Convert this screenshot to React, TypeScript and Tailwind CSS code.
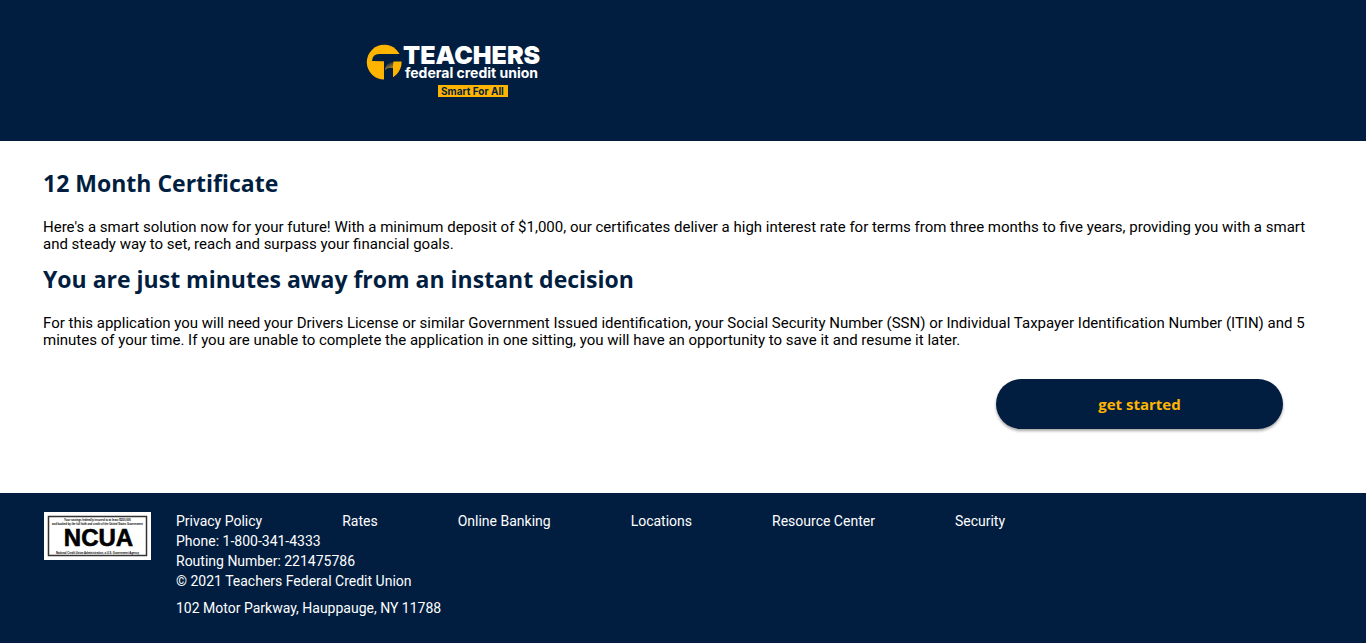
import React from "react";

const links = ["Privacy Policy", "Rates", "Online Banking", "Locations", "Resource Center", "Security"];

function Logo() {
  return (
    <svg className="block h-[56px] w-[180px] overflow-visible" viewBox="0 0 180 56" role="img" aria-label="Teachers Federal Credit Union, Smart For All">
      <defs>
        <linearGradient id="stem" x1="0.8" y1="1" x2="0.4" y2="0">
          <stop offset="0" stopColor="#d9a032" />
          <stop offset="1" stopColor="#011e41" />
        </linearGradient>
      </defs>
      <circle cx="19.200" cy="19.200" r="17.400" fill="#ffb500" />
      <path d="M7 18 Q7.500 11.200 14 11 H36 L38 18.500 H24 Q20 18 7 18 Z" fill="#011e41" />
      <path d="M19 38 V17 H29 Q28 19 28 22 V36 Z" fill="#011e41" />
      <path d="M20 26 Q21 20 28 19 V25 Q23 24 20 27Z" fill="url(#stem)" />
      <g fill="#fff" fontFamily="Inter, sans-serif">
        <text x="38" y="21" fontSize="25" fontWeight="900">TEACHERS</text>
        <text x="40" y="35" fontSize="14" fontWeight="700">federal credit union</text>
      </g>
      <rect x="73" y="42" width="70" height="12" fill="#ffb500" />
      <text x="76" y="52" fontSize="10" fontWeight="700" fill="#011e41" fontFamily="Inter, sans-serif">Smart For All</text>
    </svg>
  );
}

function NcuaBadge() {
  return (
    <svg className="block h-[48px] w-[107px] shrink-0" viewBox="0 0 107 48" role="img" aria-label="NCUA">
      <rect width="107" height="48" fill="#fff" />
      <rect x="4.500" y="4.500" width="98" height="39" fill="none" stroke="#333" strokeWidth="1.500" />
      <g fontFamily="Liberation Sans, sans-serif" fill="#000" textAnchor="middle" fontWeight="700">
        <text x="53.500" y="9" fontSize="2.800">Your savings federally insured to at least $250,000</text>
        <text x="53.500" y="12.500" fontSize="2.700">and backed by the full faith and credit of the United States Government</text>
        <text x="54.500" y="34" fontSize="24" stroke="#000" strokeWidth="0.600">NCUA</text>
        <text x="53.500" y="42" fontSize="2.700">National Credit Union Administration, a U.S. Government Agency</text>
      </g>
    </svg>
  );
}

export default function App() {
  return (
    <div className="bg-white font-['Roboto',sans-serif] text-black">
      <header className="bg-[#011e41] pt-[43px] pb-[42px] pl-[365px]">
        <Logo />
      </header>
      <main className="px-[43px] pt-7 pb-16">
        <h1 className="font-['Open_Sans',sans-serif] text-[23px] leading-7 font-bold text-[#011e41]">12 Month Certificate</h1>
        <p className="mt-[22px] text-[15px] leading-[17px]">
          Here's a smart solution now for your future! With a minimum deposit of $1,000, our certificates deliver a high interest rate for terms from three months to five years, providing you with a smart and steady way to set, reach and surpass your financial goals.
        </p>
        <h2 className="mt-3 font-['Open_Sans',sans-serif] text-[23px] leading-7 font-bold text-[#011e41]">You are just minutes away from an instant decision</h2>
        <p className="mt-[22px] text-[15px] leading-[17px]">
          For this application you will need your Drivers License or similar Government Issued identification, your Social Security Number (SSN) or Individual Taxpayer Identification Number (ITIN) and 5 minutes of your time. If you are unable to complete the application in one sitting, you will have an opportunity to save it and resume it later.
        </p>
        <div className="mt-[30px] flex justify-end pr-10">
          <button type="button" className="h-[50px] w-[287px] rounded-full bg-[#011e41] font-['Open_Sans',sans-serif] text-[15px] font-bold text-[#ffb500] shadow-[0_2px_3px_rgba(0,0,0,0.35)]">get started</button>
        </div>
      </main>
      <footer className="flex gap-[25px] bg-[#011e41] px-11 pt-[18px] pb-[26px] text-[14px] leading-5 text-white">
        <div className="pt-px">
          <NcuaBadge />
        </div>
        <div>
          <nav className="flex gap-20">
            {links.map((l) => (
              <a key={l} href="#">{l}</a>
            ))}
          </nav>
          <p>Phone: 1-800-341-4333</p>
          <p>Routing Number: 221475786</p>
          <p>© 2021 Teachers Federal Credit Union</p>
          <p className="mt-[7px]">102 Motor Parkway, Hauppauge, NY 11788</p>
        </div>
      </footer>
    </div>
  );
}
